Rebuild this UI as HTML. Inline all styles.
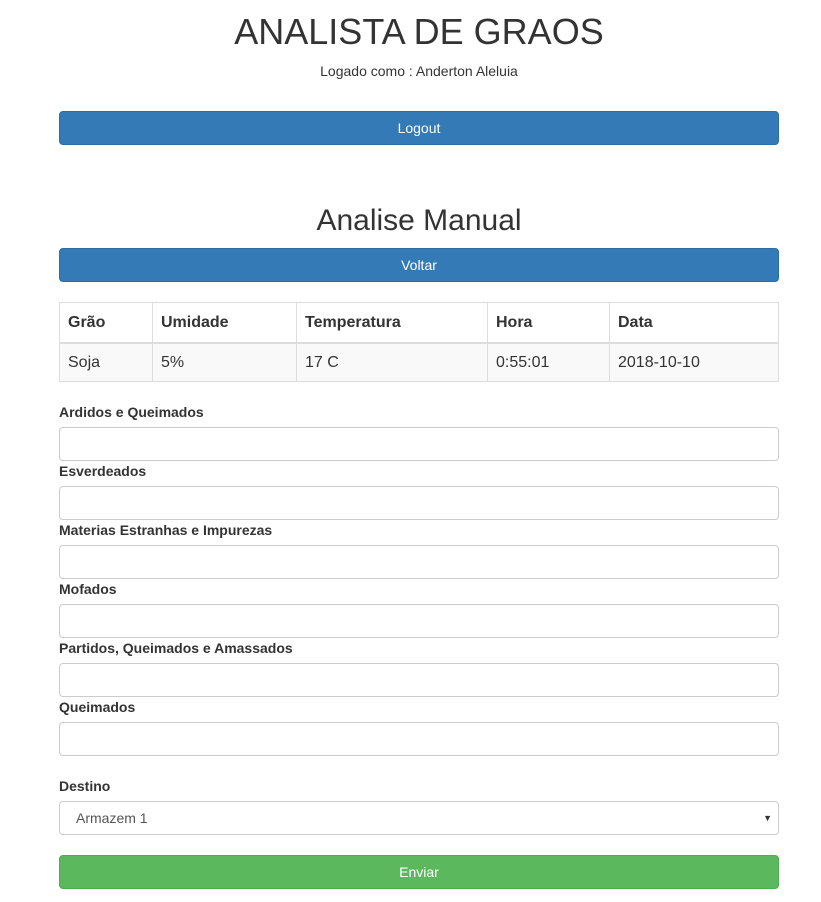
<!DOCTYPE html>
<html><head><meta charset="utf-8"><style>
*{box-sizing:border-box}
body{margin:0;font-family:"Liberation Sans",Arial,sans-serif;font-size:14px;color:#333;background:#fff}
.c{position:absolute;left:59px;width:720px}
.t{position:absolute;left:59px;width:720px;text-align:center}
.btn{position:absolute;left:59px;width:720px;height:34px;border-radius:4px;color:#fff;text-align:center;line-height:32px;font-size:14px}
.blue{background:#337ab7;border:1px solid #2e6da4}
.green{background:#5cb85c;border:1px solid #4cae4c}
table{border-collapse:collapse;width:720px;font-size:16px}
td,th{border:1px solid #ddd;padding:2px 8px 0;text-align:left}
th{height:40px;border-bottom:2px solid #ddd}
td{height:39px;background:#f9f9f9}
label{position:absolute;left:59px;font-weight:bold;font-size:14px;line-height:20px}
.in{position:absolute;left:59px;width:720px;height:34px;border:1px solid #ccc;border-radius:4px;background:#fff}
</style></head><body>
<div class="t" style="top:10px;font-size:36px;line-height:44px">ANALISTA DE GRAOS</div>
<div class="t" style="top:61px;line-height:20px">Logado como : Anderton Aleluia</div>
<div class="btn blue" style="top:111px">Logout</div>
<div class="t" style="top:203px;font-size:30px;line-height:36px">Analise Manual</div>
<div class="btn blue" style="top:248px">Voltar</div>
<div class="c" style="top:302px"><table>
<tr><th style="width:93px">Grão</th><th style="width:144px">Umidade</th><th style="width:191px">Temperatura</th><th style="width:122px">Hora</th><th>Data</th></tr>
<tr><td>Soja</td><td>5%</td><td>17 C</td><td>0:55:01</td><td>2018-10-10</td></tr></table></div>
<label style="top:402px">Ardidos e Queimados</label><div class="in" style="top:427px"></div>
<label style="top:461px">Esverdeados</label><div class="in" style="top:486px"></div>
<label style="top:520px">Materias Estranhas e Impurezas</label><div class="in" style="top:545px"></div>
<label style="top:579px">Mofados</label><div class="in" style="top:604px"></div>
<label style="top:638px">Partidos, Queimados e Amassados</label><div class="in" style="top:663px"></div>
<label style="top:697px">Queimados</label><div class="in" style="top:722px"></div>
<label style="top:776px">Destino</label>
<div class="in" style="top:801px;padding-left:16px;line-height:32px;color:#555">Armazem 1<span style="position:absolute;right:6px;font-size:9px;color:#333">▼</span></div>
<div class="btn green" style="top:855px">Enviar</div>
</body></html>
